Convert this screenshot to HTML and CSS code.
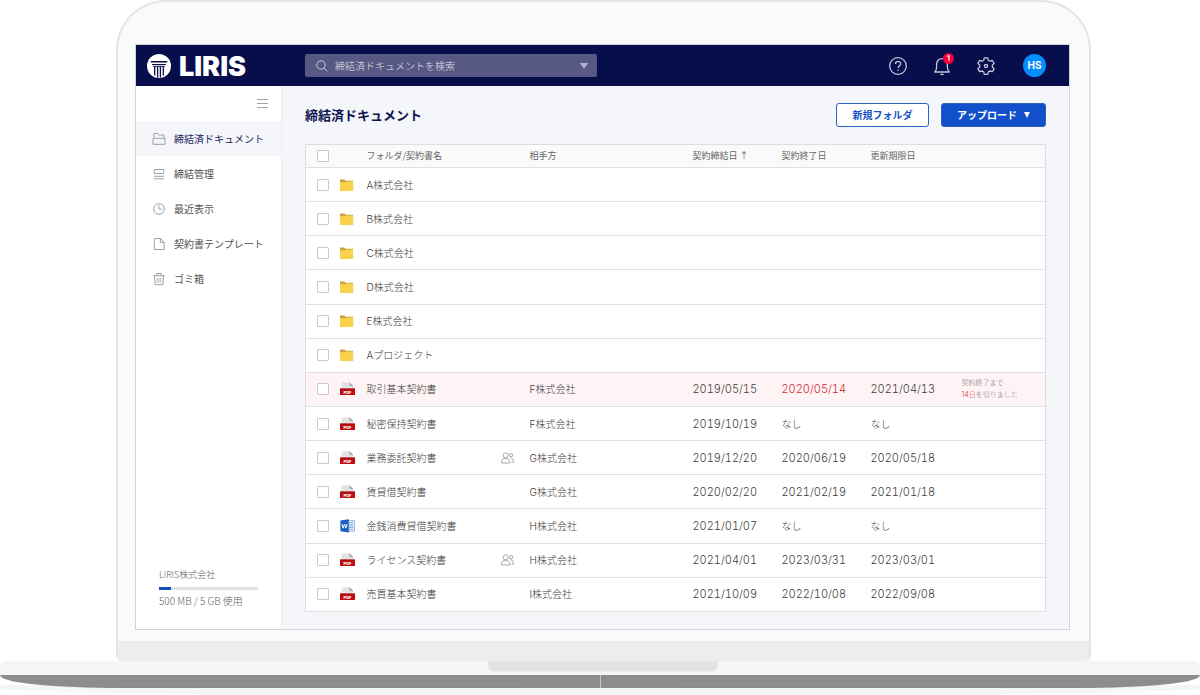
FILE: index.html
```
<!DOCTYPE html>
<html lang="ja">
<head>
<meta charset="utf-8">
<meta name="viewport" content="width=device-width, initial-scale=1">
<title>LIRIS 締結済ドキュメント</title>
<link rel="stylesheet" href="styles.css">
</head>
<body>
<svg class="sprite" aria-hidden="true">
  <symbol id="folder" viewBox="0 0 14 12"><path d="M0 1.500V.6h4.600l.9 1.100H13V4H0z" fill="#c9a53c"/><path d="M0 3.200h5l.8-.7h7.400V12H0z" fill="#f8d24b"/></symbol>
  <symbol id="pdf" viewBox="0 0 15 14"><path d="M1.500 7V1.600L3 .3h6.500L13 3.800V7z" fill="#e3e3e3"/><path d="M9.500.3 13 3.800V4.500L9.500 3.800z" fill="#a9a9a9"/><path d="M0 6.600h15V13H0z" fill="#c00d12"/><path d="M0 6.600h15v1H0z" fill="#a00a0e"/></symbol>
  <symbol id="word" viewBox="0 0 15 14"><path d="M7 1.600h7.400v10.600H7z" fill="#fff" stroke="#6c9ddb" stroke-width=".8"/><path d="M9 3.500h4.200M9 5.200h4.200M9 6.900h4.200M9 8.600h4.200M9 10.300h4.200" stroke="#5b92d8" stroke-width=".8"/><path d="M.4 1.600 8.800.2v13.300L.4 12.200z" fill="#1a5dbe"/><path d="m2 4.900 1.100 4.300 1.400-4.100 1.400 4.100L7.100 4.900" fill="none" stroke="#fff" stroke-width="1"/></symbol>
  <symbol id="people" viewBox="0 0 14 12"><g fill="none" stroke="#98a0a6" stroke-width=".9"><circle cx="4.600" cy="3.400" r="2.500"/><path d="M.5 11c0-2.700 1.100-4 2.700-4.600.9.6 1.900.6 2.800 0C7.600 7 8.800 8.300 8.800 11z"/><circle cx="10" cy="3.200" r="1.700"/><path d="M9.500 6c2.100-.2 3 1.500 3.100 4.200h-2.100"/></g></symbol>
</svg>

<div class="laptop">
  <div class="lid">
    <div class="screen">
      <header class="topbar">
        <div class="brand">
          <svg class="brand-mark" viewBox="0 0 24 24" aria-hidden="true"><circle cx="12" cy="12" r="12" fill="#fff"/><g stroke="#0a0d4a" fill="none"><path d="M3.800 7.800h16.400" stroke-width="1.500"/><path d="M5 10.500h14" stroke-width="1.200"/><path d="M6.200 12.300h11.600" stroke-width="1"/><path d="M7.700 12.500v9M10.600 12.500v11M13.400 12.500v11M16.300 12.500v9" stroke-width="1.300"/></g></svg>
          <span class="brand-name">LIRIS</span>
        </div>
        <form class="search" role="search">
          <svg class="search-icon" viewBox="0 0 12 12" aria-hidden="true"><circle cx="5" cy="5" r="4.200"/><path d="m8 8 3.300 3.300"/></svg>
          <input class="search-input" type="search" aria-label="検索" placeholder="締結済ドキュメントを検索">
          <button class="search-toggle" type="button" aria-label="検索条件"><span class="caret"></span></button>
        </form>
        <div class="actions">
          <button class="icon-button" type="button" aria-label="ヘルプ"><svg viewBox="0 0 20 20"><circle cx="10" cy="10" r="8.300"/><path d="M7.500 8c0-3.500 5.200-3.400 5.200-.2 0 2-2.600 2-2.600 4.300"/><path d="M10.100 13.500v1.500"/></svg></button>
          <button class="icon-button" type="button" aria-label="通知"><svg viewBox="0 0 20 20"><path d="M2.700 16h14.600c-1.600-1.300-1.900-2.400-1.900-4.700V8.600c0-3.600-2.100-6-5.400-6s-5.400 2.400-5.400 6v2.700c0 2.300-.3 3.400-1.900 4.700zM8.500 17.800c.6.900 2.400.9 3 0"/></svg><span class="badge">1</span></button>
          <button class="icon-button" type="button" aria-label="設定"><svg viewBox="0 0 20 20"><path d="M8.300 1.800h3.400l.6 2.500 1.600.9 2.500-.7 1.700 2.900-1.800 1.800v1.800l1.800 1.800-1.700 2.900-2.500-.7-1.600.9-.6 2.500H8.300l-.6-2.500-1.600-.9-2.500.7-1.700-2.900L3.700 11V9.200L1.900 7.400l1.700-2.900 2.500.7 1.600-.9z"/><circle cx="10" cy="10.100" r="1.600"/></svg></button>
          <button class="avatar" type="button">HS</button>
        </div>
      </header>

      <div class="body">
        <aside class="sidebar">
          <button class="menu-toggle" type="button" aria-label="メニュー"><svg viewBox="0 0 11 9"><path d="M0 .5h11M0 4.500h11M0 8.500h11"/></svg></button>
          <nav class="nav">
            <a class="nav-item nav-item-active" href="#"><svg viewBox="0 0 14 14"><path d="M2 5.800V1.500h3.600l1 1.500h5.400v2.800M1 6.300h12v6H1z"/></svg>締結済ドキュメント</a>
            <a class="nav-item" href="#"><svg viewBox="0 0 14 14"><path d="M2.300 2.500h9.400v4H2.300zM2 9.300h10M2 11.800h10"/></svg>締結管理</a>
            <a class="nav-item" href="#"><svg viewBox="0 0 14 14"><circle cx="7" cy="7" r="5.300"/><path d="M7 3.500V7.200h3"/></svg>最近表示</a>
            <a class="nav-item" href="#"><svg viewBox="0 0 14 14"><path d="M2.300 1.500H8.500l3.600 3.700v7.300H2.300zM8.300 1.700v3.700h3.600"/></svg>契約書テンプレート</a>
            <a class="nav-item" href="#"><svg viewBox="0 0 14 14"><path d="M1.300 3.700h11.400M4.800 3.500V1.500h4.400v2M2.500 3.900l.7 8.800h7.600l.7-8.800"/><path d="M5.200 6v4.700M7 6v4.700M8.800 6v4.700" stroke-width=".7"/></svg>ゴミ箱</a>
          </nav>
          <div class="storage">
            <div>LIRIS株式会社</div>
            <div class="meter"><div class="meter-fill" style="width:12%"></div></div>
            <div class="storage-usage">500 MB / 5 GB 使用</div>
          </div>
        </aside>

        <main class="main">
          <div class="heading">
            <h1 class="title">締結済ドキュメント</h1>
            <button class="button button-outline" type="button">新規フォルダ</button>
            <button class="button button-primary" type="button">アップロード<span class="caret caret-small"></span></button>
          </div>
          <table class="documents">
            <colgroup><col class="col-check"><col class="col-icon"><col class="col-name"><col class="col-shared"><col><col class="col-date"><col class="col-date"><col class="col-update"><col class="col-note"></colgroup>
            <thead>
              <tr><th class="check"><input type="checkbox" aria-label="すべて選択"></th><th></th><th>フォルダ/契約書名</th><th></th><th>相手方</th><th>契約締結日 ↑</th><th>契約終了日</th><th>更新期限日</th><th></th></tr>
            </thead>
            <tbody>
              <tr><td class="check"><input type="checkbox" aria-label="A株式会社"></td><td><svg class="folder"><use href="#folder"/></svg></td><td>A株式会社</td><td></td><td></td><td></td><td></td><td></td><td></td></tr>
              <tr><td class="check"><input type="checkbox" aria-label="B株式会社"></td><td><svg class="folder"><use href="#folder"/></svg></td><td>B株式会社</td><td></td><td></td><td></td><td></td><td></td><td></td></tr>
              <tr><td class="check"><input type="checkbox" aria-label="C株式会社"></td><td><svg class="folder"><use href="#folder"/></svg></td><td>C株式会社</td><td></td><td></td><td></td><td></td><td></td><td></td></tr>
              <tr><td class="check"><input type="checkbox" aria-label="D株式会社"></td><td><svg class="folder"><use href="#folder"/></svg></td><td>D株式会社</td><td></td><td></td><td></td><td></td><td></td><td></td></tr>
              <tr><td class="check"><input type="checkbox" aria-label="E株式会社"></td><td><svg class="folder"><use href="#folder"/></svg></td><td>E株式会社</td><td></td><td></td><td></td><td></td><td></td><td></td></tr>
              <tr><td class="check"><input type="checkbox" aria-label="Aプロジェクト"></td><td><svg class="folder"><use href="#folder"/></svg></td><td>Aプロジェクト</td><td></td><td></td><td></td><td></td><td></td><td></td></tr>
              <tr class="row-alert"><td class="check"><input type="checkbox" aria-label="取引基本契約書"></td><td><svg class="file"><use href="#pdf"/><text x="7.500" y="11.600">PDF</text></svg></td><td>取引基本契約書</td><td></td><td>F株式会社</td><td class="date">2019/05/15</td><td class="date expired">2020/05/14</td><td class="date">2021/04/13</td><td class="note">契約終了まで<br><span class="expired">14日</span>を切りました</td></tr>
              <tr><td class="check"><input type="checkbox" aria-label="秘密保持契約書"></td><td><svg class="file"><use href="#pdf"/><text x="7.500" y="11.600">PDF</text></svg></td><td>秘密保持契約書</td><td></td><td>F株式会社</td><td class="date">2019/10/19</td><td>なし</td><td>なし</td><td></td></tr>
              <tr><td class="check"><input type="checkbox" aria-label="業務委託契約書"></td><td><svg class="file"><use href="#pdf"/><text x="7.500" y="11.600">PDF</text></svg></td><td>業務委託契約書</td><td><svg class="people"><use href="#people"/></svg></td><td>G株式会社</td><td class="date">2019/12/20</td><td class="date">2020/06/19</td><td class="date">2020/05/18</td><td></td></tr>
              <tr><td class="check"><input type="checkbox" aria-label="賃貸借契約書"></td><td><svg class="file"><use href="#pdf"/><text x="7.500" y="11.600">PDF</text></svg></td><td>賃貸借契約書</td><td></td><td>G株式会社</td><td class="date">2020/02/20</td><td class="date">2021/02/19</td><td class="date">2021/01/18</td><td></td></tr>
              <tr><td class="check"><input type="checkbox" aria-label="金銭消費貸借契約書"></td><td><svg class="file"><use href="#word"/></svg></td><td>金銭消費貸借契約書</td><td></td><td>H株式会社</td><td class="date">2021/01/07</td><td>なし</td><td>なし</td><td></td></tr>
              <tr><td class="check"><input type="checkbox" aria-label="ライセンス契約書"></td><td><svg class="file"><use href="#pdf"/><text x="7.500" y="11.600">PDF</text></svg></td><td>ライセンス契約書</td><td><svg class="people"><use href="#people"/></svg></td><td>H株式会社</td><td class="date">2021/04/01</td><td class="date">2023/03/31</td><td class="date">2023/03/01</td><td></td></tr>
              <tr><td class="check"><input type="checkbox" aria-label="売買基本契約書"></td><td><svg class="file"><use href="#pdf"/><text x="7.500" y="11.600">PDF</text></svg></td><td>売買基本契約書</td><td></td><td>I株式会社</td><td class="date">2021/10/09</td><td class="date">2022/10/08</td><td class="date">2022/09/08</td><td></td></tr>
            </tbody>
          </table>
        </main>
      </div>
    </div>
    <div class="chin"></div>
  </div>
  <svg class="base" viewBox="0 0 1200 34" preserveAspectRatio="none" aria-hidden="true">
    <path d="M0 24h1200v4q-60 4-200 5v1H200v-1Q60 32 0 28z" fill="#f5f5f5"/>
    <path d="M2 0h1196q2 4 2 14H0Q0 4 2 0z" fill="#f5f5f5"/>
    <path d="M488 0h230v4q0 6-7 6.500H495q-7-.5-7-6.500z" fill="#e2e2e2"/>
    <path d="M0 14h1200c0 7-40 12-110 13H110C40 26 0 21 0 14z" fill="#8c8c8c"/>
    <path d="M120 23.500h400M680 23.500h400" stroke="#969696" stroke-width="1"/>
    <path d="M600.500 14v13" stroke="#c4c4c4" stroke-width="1"/>
  </svg>
</div>
</body>
</html>
```

FILE: styles.css
```
* { box-sizing: border-box; }

body {
  margin: 0;
  background: #fff;
  color: #3c3c3c;
  font: 300 10px/16px "Noto Sans CJK JP", sans-serif;
}

button, input { font: inherit; color: inherit; }
button { padding: 0; border: 0; background: none; cursor: pointer; }
a { color: inherit; text-decoration: none; }
svg { display: block; }
.sprite { position: absolute; width: 0; height: 0; }

/* Laptop frame */
.lid {
  margin: 0 109px 0 116px;
  padding: 42px 0 0;
  overflow: hidden;
  background: #fafafa;
  border: 2px solid #e4e4e4;
  border-bottom: 0;
  border-radius: 50px 50px 6px 6px;
}
.screen {
  display: flex;
  flex-direction: column;
  margin: 0 19px 11px 17px;
  border: 1px solid #d3d5da;
  background: #f4f6fa;
}
.chin { height: 20px; background: #ededed; }
.base { width: 100%; height: 34px; }

/* Top bar */
.topbar {
  display: flex;
  align-items: center;
  height: 41px;
  padding: 0 23px 0 11px;
  background: #080d4b;
  color: #fff;
}
.brand { display: flex; align-items: center; gap: 8px; width: 158px; }
.brand-mark { width: 24px; height: 24px; }
.brand-name { padding-top: 3px; font: 900 27px/28px Inter, sans-serif; }
.search {
  display: flex;
  align-items: center;
  width: 292px;
  height: 23px;
  padding: 0 8px 0 11px;
  border-radius: 2px;
  background: #575884;
}
.search-icon { width: 12px; height: 12px; fill: none; stroke: #c7c8db; stroke-width: 1; }
.search-input {
  flex: 1;
  min-width: 0;
  height: 23px;
  padding: 0 7px;
  border: 0;
  outline: 0;
  background: none;
  appearance: none;
}
.search-input::placeholder { color: #e0e1ec; opacity: 1; }
.search-toggle { display: flex; width: 11px; height: 23px; align-items: center; justify-content: center; color: #b4b5d0; }
.caret {
  border: solid transparent;
  border-width: 6px 4px 0;
  border-top-color: currentColor;
}
.actions { display: flex; align-items: center; gap: 24px; margin-left: auto; }
.icon-button { position: relative; width: 20px; height: 20px; }
.icon-button svg { width: 20px; height: 20px; fill: none; stroke: #c3c5d9; stroke-width: 1.3; stroke-linejoin: round; }
.badge {
  position: absolute;
  top: -3px;
  right: -2px;
  width: 11px;
  height: 11px;
  border-radius: 50%;
  background: #f8003e;
  font: 600 8px/11px Inter, sans-serif;
}
.avatar {
  width: 23px;
  height: 23px;
  margin-left: 3px;
  border-radius: 50%;
  background: #058cff;
  font: 700 10px/23px Inter, sans-serif;
}

/* Sidebar */
.body { display: flex; }
.sidebar {
  display: flex;
  flex-direction: column;
  flex: 0 0 146px;
  background: #fff;
  border-right: 1px solid #eceef2;
}
.menu-toggle { align-self: flex-end; height: 35px; padding: 0 13px; }
.menu-toggle svg { width: 11px; height: 9px; stroke: #a5a5a5; stroke-width: 1; }
.nav-item { display: flex; align-items: center; gap: 8px; height: 35px; padding: 0 16px; color: #505050; white-space: nowrap; font-weight: 400; }
.nav-item svg { width: 14px; height: 14px; fill: none; stroke: #a0a0a0; stroke-width: 1; }
.nav-item-active { background: #f4f6fa; color: #1c1f62; }
.storage { margin-top: auto; padding: 0 23px 20px; color: #666; font-size: 9px; }
.meter { height: 3px; margin: 4px 0 3px; background: #e2e2e2; }
.meter-fill { height: 3px; background: #134fbd; }
.storage-usage { white-space: nowrap; font-size: 10px; }

/* Main area */
.main { flex: 1; min-width: 0; padding: 17px 23px; }
.heading { display: flex; align-items: center; gap: 12px; margin-bottom: 17px; }
.title { flex: 1; margin: 0; color: #10144f; font-size: 13px; line-height: 24px; font-weight: 700; }
.button {
  display: flex;
  align-items: center;
  justify-content: center;
  gap: 7px;
  height: 24px;
  border: 1px solid #2b60c4;
  border-radius: 3px;
  font-weight: 700;
}
.button-outline { width: 93px; background: #fff; color: #1650c4; }
.button-primary { width: 105px; background: #1250cb; color: #fff; }
.caret-small { border-width: 6px 3px 0; }

/* Document table */
.documents {
  width: 100%;
  height: 468px;
  table-layout: fixed;
  border-collapse: collapse;
  background: #fff;
  border: 1px solid #dcdee2;
  font-family: Inter, "Noto Sans CJK JP", sans-serif;
}
.col-check { width: 34px; }
.col-icon { width: 27px; }
.col-name { width: 134px; }
.col-shared { width: 29px; }
.col-date { width: 89px; }
.col-update { width: 91px; }
.col-note { width: 84px; }
.documents th, .documents td { padding: 0; text-align: left; vertical-align: middle; white-space: nowrap; }
.documents tr { border-bottom: 1px solid #dfe0e3; }
.documents thead tr { height: 23px; background: #fafafa; }
.documents th { color: #666; font-family: "Noto Sans CJK JP", sans-serif; font-size: 9px; font-weight: 400; }
.documents td { height: 34px; }
.documents .check { padding-left: 11px; }
.documents input {
  display: block;
  appearance: none;
  width: 12px;
  height: 12px;
  margin: 0;
  border: 1px solid #cacaca;
  border-radius: 1px;
  background: #fff;
}
.folder { width: 14px; height: 12px; }
.file { width: 15px; height: 14px; }
.file text { fill: #fff; font: 800 4px Inter, sans-serif; text-anchor: middle; }
.people { width: 14px; height: 12px; }
.documents .date { font-size: 11px; font-variant-numeric: tabular-nums; }
.row-alert { background: #fff4f5; }
.documents .expired { color: #d21f2c; }
.documents .note { color: #777; font-size: 7px; line-height: 12px; }
```
